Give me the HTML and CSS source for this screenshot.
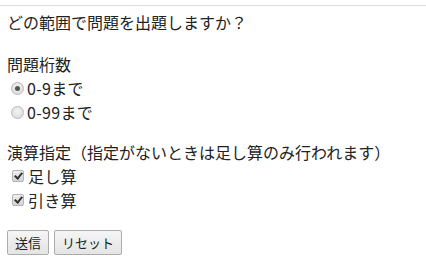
FILE: index.html
```html
<!DOCTYPE html>
<html lang="ja">
<head>
  <meta charset="UTF-8">
  <title>出題範囲の設定</title>
  <link rel="stylesheet" href="styles.css">
</head>
<body>
  <hr class="top-rule">
  <form class="quiz-form">
    <p class="question">どの範囲で問題を出題しますか？</p>

    <!-- 問題桁数 -->
    <div class="group">
      <div class="group-title">問題桁数</div>
      <label class="option">
        <input type="radio" name="digits" value="9" checked>
        <span>0-9まで</span>
      </label>
      <label class="option">
        <input type="radio" name="digits" value="99">
        <span>0-99まで</span>
      </label>
    </div>

    <!-- 演算指定 -->
    <div class="group">
      <div class="group-title">演算指定（指定がないときは足し算のみ行われます）</div>
      <label class="option">
        <input type="checkbox" name="op" value="add" checked>
        <span>足し算</span>
      </label>
      <label class="option">
        <input type="checkbox" name="op" value="sub" checked>
        <span>引き算</span>
      </label>
    </div>

    <div class="buttons">
      <button type="submit">送信</button>
      <button type="reset">リセット</button>
    </div>
  </form>
</body>
</html>
```

FILE: styles.css
```css
* { margin: 0; padding: 0; box-sizing: border-box; }

html, body {
  background: #fff;
  color: #222;
  font-family: "Noto Sans CJK JP", "Noto Sans", sans-serif;
  font-size: 16px;
  line-height: 24px;
}

/* 上の区切り線 */
.top-rule {
  border: none;
  border-top: 1px solid #dcdcdc;
  margin-top: 5px;
}

.quiz-form {
  padding: 4px 7px 0;
}

.question {
  margin-bottom: 18px;
}

.group {
  margin-bottom: 16px;
}

.option {
  display: flex;
  align-items: center;
  height: 24px;
}

.option span {
  margin-left: 3px;
  letter-spacing: 0.3px;
}

/* ラジオボタン */
.option input[type="radio"] {
  appearance: none;
  -webkit-appearance: none;
  width: 13px;
  height: 13px;
  margin-left: 4px;
  border: 1px solid #b9b9b9;
  border-radius: 50%;
  background: radial-gradient(circle at 50% 40%, #f4f4f4, #d6d6d6);
  position: relative;
}

.option input[type="radio"]:checked::after {
  content: "";
  position: absolute;
  left: 3px;
  top: 3px;
  width: 5px;
  height: 5px;
  border-radius: 50%;
  background: #555;
}

/* チェックボックス */
.option input[type="checkbox"] {
  appearance: none;
  -webkit-appearance: none;
  width: 12px;
  height: 12px;
  margin-left: 5px;
  margin-right: 1px;
  border: 1px solid #b4b4b4;
  border-radius: 2px;
  background: linear-gradient(#eeeeee, #d4d4d4);
  position: relative;
}

.option input[type="checkbox"]:checked::after {
  content: "";
  position: absolute;
  left: 3px;
  top: 0px;
  width: 3px;
  height: 6px;
  border: solid #333;
  border-width: 0 2px 2px 0;
  transform: rotate(40deg);
}

/* ボタン */
.buttons {
  display: flex;
  gap: 5px;
  margin-top: 18px;
}

.buttons button {
  font-family: inherit;
  font-size: 13px;
  line-height: 1;
  color: #222;
  height: 25px;
  padding: 0 7px;
  border: 1px solid #acacac;
  border-radius: 2px;
  background: linear-gradient(#f5f5f5, #e4e4e4);
}
```
